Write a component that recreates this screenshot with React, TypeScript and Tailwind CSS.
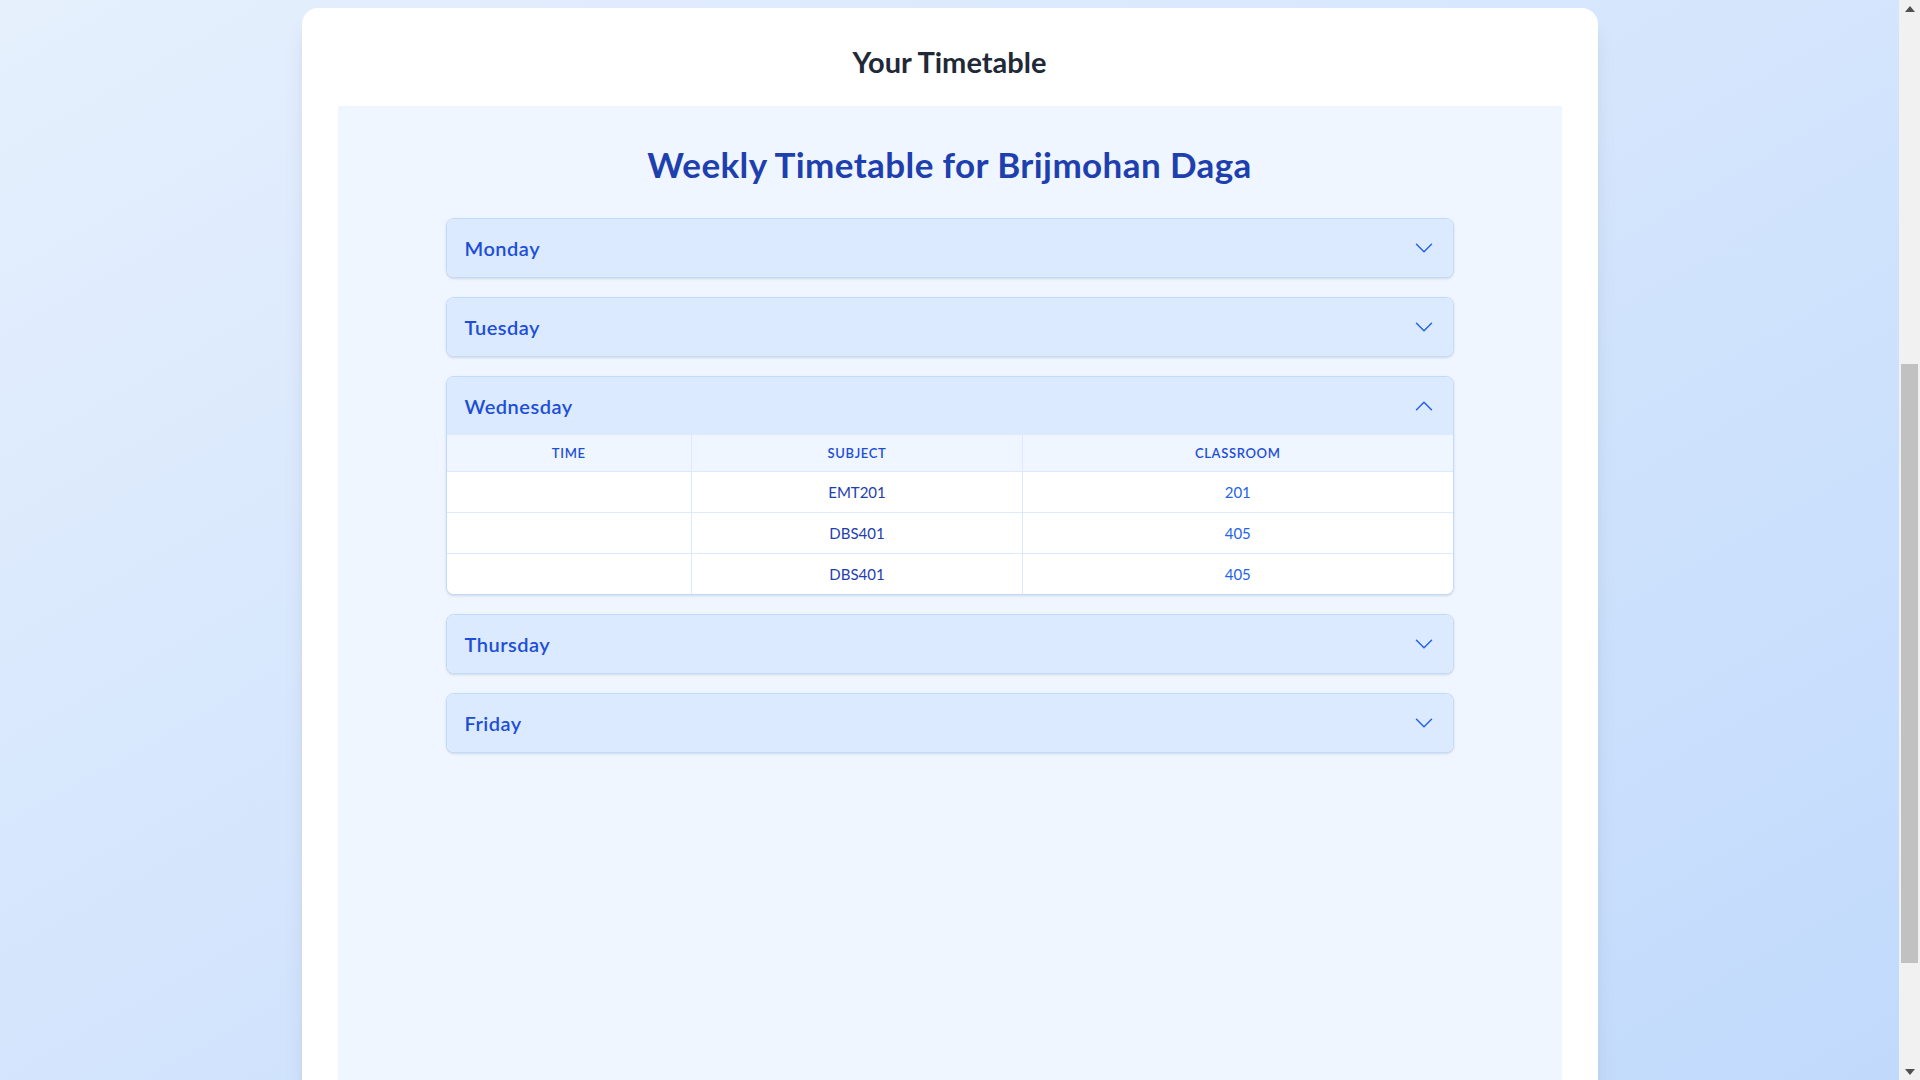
import React, { useEffect, useRef, useState } from "react";

type Slot = { time: string; subject: string; room: string };

const days: { name: string; slots: Slot[] }[] = [
  { name: "Monday", slots: [] },
  { name: "Tuesday", slots: [] },
  {
    name: "Wednesday",
    slots: [
      { time: "", subject: "EMT201", room: "201" },
      { time: "", subject: "DBS401", room: "405" },
      { time: "", subject: "DBS401", room: "405" },
    ],
  },
  { name: "Thursday", slots: [] },
  { name: "Friday", slots: [] },
];

function Chevron({ up }: { up?: boolean }) {
  return (
    <svg
      width="24"
      height="24"
      viewBox="0 0 24 24"
      fill="none"
      stroke="#2563eb"
      strokeWidth={1.5}
      strokeLinecap="round"
      strokeLinejoin="round"
    >
      {up ? <path d="M4.5 15.75l7.5-7.5 7.5 7.5" /> : <path d="M19.5 8.25l-7.5 7.5-7.5-7.5" />}
    </svg>
  );
}

function DayItem({ name, slots, defaultOpen }: { name: string; slots: Slot[]; defaultOpen?: boolean }) {
  const [open, setOpen] = useState(!!defaultOpen);
  return (
    <div className="border border-[#bfdbfe] rounded-lg overflow-hidden shadow-sm bg-white">
      <button
        onClick={() => setOpen(!open)}
        className="w-full h-[58px] flex items-center justify-between pl-[18px] pr-[17px] bg-[#dbeafe] text-left"
      >
        <span className="text-[20px] tracking-[0.5px] font-semibold text-[#1d4ed8]">{name}</span>
        <Chevron up={open} />
      </button>
      {open && (
        <table className="w-full border-collapse table-fixed">
          <thead>
            <tr className="h-[36px] bg-[#eff6ff]">
              <th className="w-[245px] pt-[2px] text-[13px] font-semibold uppercase tracking-wider text-[#1d4ed8] text-center border-r border-[#dbeafe]">
                Time
              </th>
              <th className="w-[331px] pt-[2px] text-[13px] font-semibold uppercase tracking-wider text-[#1d4ed8] text-center border-r border-[#dbeafe]">
                Subject
              </th>
              <th className="pt-[2px] text-[13px] font-semibold uppercase tracking-wider text-[#1d4ed8] text-center">
                Classroom
              </th>
            </tr>
          </thead>
          <tbody>
            {slots.map((s, i) => (
              <tr key={i} className="h-[41px] border-t border-[#dbeafe] bg-white">
                <td className="pt-[1px] text-[15px] text-center text-[#1e40af] border-r border-[#dbeafe]">{s.time}</td>
                <td className="pt-[1px] text-[15px] text-center text-[#1e40af] border-r border-[#dbeafe]">{s.subject}</td>
                <td className="pt-[1px] text-[15px] text-center text-[#2563eb]">{s.room}</td>
              </tr>
            ))}
          </tbody>
        </table>
      )}
    </div>
  );
}

function ScrollBar() {
  return (
    <div className="w-[21px] h-screen bg-[#f1f1f1] flex flex-col shrink-0">
      <div className="h-[17px] flex items-center justify-center">
        <svg width="10" height="6" viewBox="0 0 10 6">
          <path d="M5 0 L10 6 L0 6 Z" fill="#505050" />
        </svg>
      </div>
      <div className="flex-1 px-[2px]">
        <div className="mt-[347px] h-[599px] bg-[#c1c1c1]" />
      </div>
      <div className="h-[17px] flex items-center justify-center">
        <svg width="10" height="6" viewBox="0 0 10 6">
          <path d="M0 0 L10 0 L5 6 Z" fill="#505050" />
        </svg>
      </div>
    </div>
  );
}

export default function App() {
  const ref = useRef<HTMLDivElement>(null);
  useEffect(() => {
    if (ref.current) ref.current.scrollTop = 625;
  }, []);
  return (
    <div className="flex h-screen overflow-hidden" style={{ fontFamily: "Lato, 'Noto Sans', sans-serif" }}>
      <div
        ref={ref}
        className="flex-1 h-screen overflow-y-scroll bg-gradient-to-br from-[#e6f0fd] to-[#c1dafc]"
      >
        <div className="pt-[633px] pb-[16px]">
          <div className="w-[1296px] mx-auto bg-white rounded-2xl shadow-xl pt-[37px] px-[36px]">
            <h2 className="text-[29px] leading-[34px] font-bold text-[#1f2937] text-center mb-[27px]">
              Your Timetable
            </h2>
            <div className="bg-[#eff6ff] min-h-[1100px] pt-[38px]">
              <h1 className="text-[35px] tracking-[0.4px] leading-[40px] font-bold text-[#1e40af] text-center mb-[34px]">
                Weekly Timetable for Brijmohan Daga
              </h1>
              <div className="w-[1008px] mx-auto flex flex-col gap-[19px]">
                {days.map((d) => (
                  <DayItem key={d.name} name={d.name} slots={d.slots} defaultOpen={d.name === "Wednesday"} />
                ))}
              </div>
            </div>
          </div>
        </div>
      </div>
      <ScrollBar />
    </div>
  );
}
